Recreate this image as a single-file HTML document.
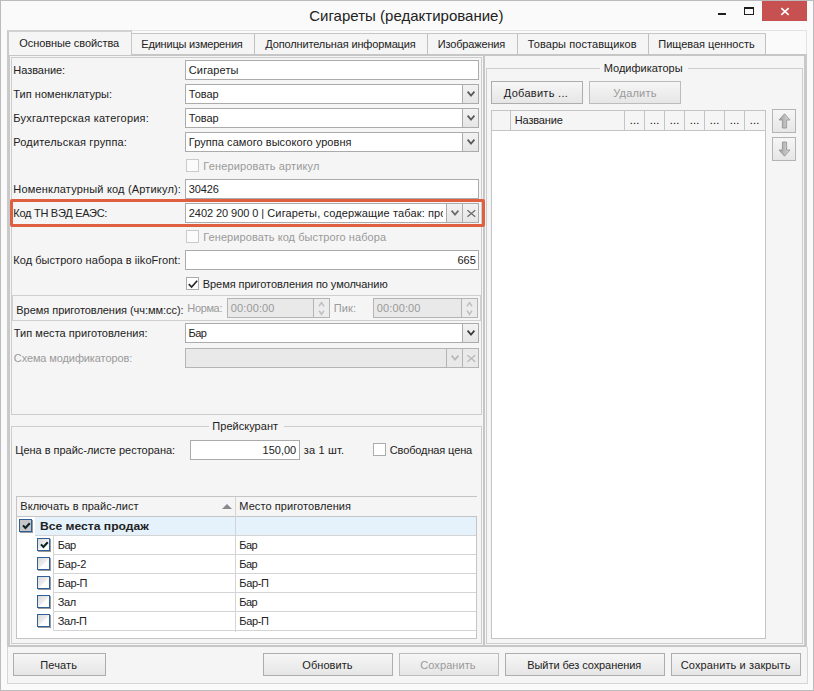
<!DOCTYPE html>
<html lang="ru"><head><meta charset="utf-8"><title>Сигареты (редактирование)</title><style>
html,body{margin:0;padding:0}
body{width:814px;height:691px;overflow:hidden;position:relative;background:#fafafa;font-family:"Liberation Sans",sans-serif;font-size:11px;color:#222}
div,span{position:absolute;box-sizing:border-box}
.t{white-space:nowrap;display:block;overflow:visible}
.in{background:#fff;border:1px solid #ababab}
.dis{background:#e9e9e9;border:1px solid #b4b4b4}
.cb{background:#fff;border:1px solid #ababab;width:13px;height:13px}
.cbd{background:#fbfbfb;border:1px solid #cacaca;width:13px;height:13px}
.btn{border:1px solid #adadad;background:linear-gradient(#f6f6f6,#e6e6e6)}
.cbtn{border:1px solid #ababab;background:linear-gradient(#f2f2f2,#e6e6e6);width:17px}
.tab{border-top:1px solid #c6c6c6;border-right:1px solid #c0c0c0;background:#f5f5f5;top:33px;height:22px}
.ln{background:#d4d4d4}
.tcb{width:13px;height:13px;border:1px solid #2f5f96;background:linear-gradient(135deg,#d9d9d9 0%,#ececec 48%,#fdfdfd 56%);box-shadow:1px 1px 0 #9a9a9a}
svg{position:absolute;overflow:visible}
</style></head><body>
<div class="" style="left:0px;top:0px;width:814px;height:691px;border:1px solid #bcbcbc"></div>
<span class="t " style="left:309.2px;top:5px;line-height:22px;height:22px;font-size:15px;letter-spacing:0.014px;">Сигареты (редактирование)</span>
<div class="" style="left:762px;top:1px;width:45px;height:20px;background:#c75050"></div>
<svg style="left:781px;top:8px" width="8" height="7" viewBox="0 0 8 7"><path d="M0.3 0.2 L7.7 6.8 M7.7 0.2 L0.3 6.8" stroke="#fff" stroke-width="1.6" fill="none"/></svg>
<div class="" style="left:744px;top:7px;width:10px;height:8px;border:1px solid #1e1e1e;border-top-width:2px"></div>
<div class="" style="left:718px;top:13px;width:8px;height:2px;background:#1e1e1e"></div>
<div class="" style="left:7px;top:30px;width:800px;height:26px;border:1px solid #e2e2e2;border-bottom:none"></div>
<div class="tab" style="left:132px;top:33px;width:123px;height:22px;"></div>
<span class="t " style="left:141.3px;top:33px;line-height:22px;height:22px;letter-spacing:-0.198px;">Единицы измерения</span>
<div class="tab" style="left:255px;top:33px;width:173px;height:22px;"></div>
<span class="t " style="left:265.3px;top:33px;line-height:22px;height:22px;letter-spacing:-0.139px;">Дополнительная информация</span>
<div class="tab" style="left:428px;top:33px;width:90px;height:22px;"></div>
<span class="t " style="left:437.8px;top:33px;line-height:22px;height:22px;letter-spacing:-0.167px;">Изображения</span>
<div class="tab" style="left:518px;top:33px;width:131px;height:22px;"></div>
<span class="t " style="left:527.8px;top:33px;line-height:22px;height:22px;letter-spacing:0.075px;">Товары поставщиков</span>
<div class="tab" style="left:649px;top:33px;width:117px;height:22px;"></div>
<span class="t " style="left:658.3px;top:33px;line-height:22px;height:22px;letter-spacing:-0.030px;">Пищевая ценность</span>
<div class="" style="left:7px;top:54px;width:800px;height:593px;border:2px solid #c6c6c6;border-left:3px solid #c9c9c9;border-right:3px solid #c9c9c9;background:#f5f5f5"></div>
<div class="" style="left:7px;top:30px;width:125px;height:25px;border-top:2px solid #d2d2d2;border-left:2px solid #c9c9c9;border-right:1px solid #c6c6c6;background:#f5f5f5"></div>
<span class="t " style="left:19.3px;top:31px;line-height:24px;height:24px;letter-spacing:-0.077px;">Основные свойства</span>
<div class="" style="left:483px;top:55px;width:2px;height:591px;background:#c6c6c6"></div>
<div class="" style="left:11px;top:57px;width:471px;height:358px;border:1px solid #cdcdcd"></div>
<div class="" style="left:11px;top:426px;width:471px;height:218px;border:1px solid #cdcdcd"></div>
<div class="" style="left:209px;top:424px;width:75px;height:5px;background:#f5f5f5"></div>
<span class="t " style="left:212.3px;top:416px;line-height:20px;height:20px;letter-spacing:0.032px;">Прейскурант</span>
<div class="" style="left:486px;top:68px;width:317px;height:576px;border:1px solid #cdcdcd"></div>
<div class="" style="left:600px;top:66px;width:88px;height:5px;background:#f5f5f5"></div>
<span class="t " style="left:603.8px;top:58px;line-height:20px;height:20px;letter-spacing:-0.010px;">Модификаторы</span>
<span class="t " style="left:13.3px;top:60px;line-height:20px;height:20px;letter-spacing:-0.047px;">Название:</span>
<span class="t " style="left:13.3px;top:84px;line-height:20px;height:20px;letter-spacing:0.035px;">Тип номенклатуры:</span>
<span class="t " style="left:13.3px;top:108px;line-height:20px;height:20px;letter-spacing:0.231px;">Бухгалтерская категория:</span>
<span class="t " style="left:13.3px;top:132px;line-height:20px;height:20px;letter-spacing:0.170px;">Родительская группа:</span>
<span class="t " style="left:13.3px;top:179px;line-height:20px;height:20px;letter-spacing:0.181px;">Номенклатурный код (Артикул):</span>
<span class="t " style="left:13.3px;top:203px;line-height:20px;height:20px;letter-spacing:-0.275px;">Код ТН ВЭД ЕАЭС:</span>
<span class="t " style="left:13.3px;top:250px;line-height:20px;height:20px;letter-spacing:0.049px;">Код быстрого набора в iikoFront:</span>
<span class="t " style="left:13.8px;top:323px;line-height:20px;height:20px;letter-spacing:0.037px;">Тип места приготовления:</span>
<span class="t " style="left:13.8px;top:348px;line-height:20px;height:20px;color:#9a9a9a;letter-spacing:-0.108px;">Схема модификаторов:</span>
<div class="in" style="left:185px;top:60px;width:294px;height:20px;"></div>
<span class="t " style="left:188.8px;top:60px;line-height:20px;height:20px;letter-spacing:0.125px;">Сигареты</span>
<div class="in" style="left:185px;top:84px;width:294px;height:20px;"></div>
<div class="cbtn" style="left:462px;top:84px;width:17px;height:20px;"><svg style="left:4px;top:6px" width="8" height="6" viewBox="0 0 8 6"><path d="M0.6 0.6 L4 4.6 L7.4 0.6" stroke="#585858" stroke-width="1.7" fill="none"/></svg></div>
<span class="t " style="left:188.8px;top:84px;line-height:20px;height:20px;letter-spacing:-0.027px;">Товар</span>
<div class="in" style="left:185px;top:108px;width:294px;height:20px;"></div>
<div class="cbtn" style="left:462px;top:108px;width:17px;height:20px;"><svg style="left:4px;top:6px" width="8" height="6" viewBox="0 0 8 6"><path d="M0.6 0.6 L4 4.6 L7.4 0.6" stroke="#585858" stroke-width="1.7" fill="none"/></svg></div>
<span class="t " style="left:188.8px;top:108px;line-height:20px;height:20px;letter-spacing:-0.027px;">Товар</span>
<div class="in" style="left:185px;top:132px;width:294px;height:20px;"></div>
<div class="cbtn" style="left:462px;top:132px;width:17px;height:20px;"><svg style="left:4px;top:6px" width="8" height="6" viewBox="0 0 8 6"><path d="M0.6 0.6 L4 4.6 L7.4 0.6" stroke="#585858" stroke-width="1.7" fill="none"/></svg></div>
<span class="t " style="left:188.8px;top:132px;line-height:20px;height:20px;letter-spacing:0.057px;">Группа самого высокого уровня</span>
<div class="in" style="left:185px;top:179px;width:294px;height:20px;"></div>
<span class="t " style="left:188.8px;top:179px;line-height:20px;height:20px;letter-spacing:-0.159px;">30426</span>
<div class="" style="left:10px;top:199px;width:475px;height:28px;border:3px solid #df6040;border-radius:2px"></div>
<div class="in" style="left:185px;top:203px;width:294px;height:20px;"></div>
<div class="cbtn" style="left:446px;top:203px;width:17px;height:20px;"><svg style="left:4px;top:6px" width="8" height="6" viewBox="0 0 8 6"><path d="M0.6 0.6 L4 4.6 L7.4 0.6" stroke="#6c6c6c" stroke-width="1.7" fill="none"/></svg></div>
<div class="cbtn" style="left:462px;top:203px;width:17px;height:20px;"><svg style="left:3.5px;top:6px" width="9" height="7" viewBox="0 0 9 7"><path d="M0.4 0.2 L8.2 6.8 M8.2 0.2 L0.4 6.8" stroke="#6c6c6c" stroke-width="1.25" fill="none"/></svg></div>
<div style="left:186px;top:204px;width:257px;height:18px;overflow:hidden"><span class="t " style="left:2.8px;top:0px;line-height:18px;height:18px;letter-spacing:-0.064px;">2402 20 900 0 |</span><span class="t " style="left:81.3px;top:0px;line-height:18px;height:18px;letter-spacing:0.132px;">Сигареты, содержащие табак: про</span></div>
<div class="in" style="left:185px;top:250px;width:294px;height:20px;"></div>
<span class="t " style="left:457.4px;top:250px;line-height:20px;height:20px;">665</span>
<div class="in" style="left:185px;top:323px;width:294px;height:20px;"></div>
<div class="cbtn" style="left:462px;top:323px;width:17px;height:20px;"><svg style="left:4px;top:6px" width="8" height="6" viewBox="0 0 8 6"><path d="M0.6 0.6 L4 4.6 L7.4 0.6" stroke="#3c3c3c" stroke-width="1.7" fill="none"/></svg></div>
<span class="t " style="left:188.5px;top:323px;line-height:20px;height:20px;letter-spacing:-0.523px;">Бар</span>
<div class="dis" style="left:185px;top:348px;width:294px;height:20px;"></div>
<div class="cbtn" style="left:446px;top:348px;width:17px;height:20px;background:#e9e9e9;border-color:#b4b4b4"><svg style="left:4px;top:6px" width="8" height="6" viewBox="0 0 8 6"><path d="M0.6 0.6 L4 4.6 L7.4 0.6" stroke="#b8b8b8" stroke-width="1.7" fill="none"/></svg></div>
<div class="cbtn" style="left:462px;top:348px;width:17px;height:20px;background:#e9e9e9;border-color:#b4b4b4"><svg style="left:3.5px;top:6px" width="9" height="7" viewBox="0 0 9 7"><path d="M0.4 0.2 L8.2 6.8 M8.2 0.2 L0.4 6.8" stroke="#b8b8b8" stroke-width="1.25" fill="none"/></svg></div>
<div class="cbd" style="left:186px;top:159px;width:13px;height:13px;"></div>
<span class="t " style="left:203.3px;top:156px;line-height:20px;height:20px;color:#9a9a9a;letter-spacing:0.152px;">Генерировать артикул</span>
<div class="cbd" style="left:186px;top:230px;width:13px;height:13px;"></div>
<span class="t " style="left:203.3px;top:227px;line-height:20px;height:20px;color:#9a9a9a;letter-spacing:0.071px;">Генерировать код быстрого набора</span>
<div class="cb" style="left:186px;top:277px;width:13px;height:13px;"><svg style="left:1px;top:2px" width="10" height="8" viewBox="0 0 10 8"><path d="M0.8 4.2 L3.6 7 L9.2 0.8" stroke="#2a2a2a" stroke-width="1.7" fill="none"/></svg></div>
<span class="t " style="left:202.8px;top:274px;line-height:20px;height:20px;letter-spacing:-0.064px;">Время приготовления по умолчанию</span>
<div class="" style="left:12px;top:295px;width:469px;height:26px;border:1px solid #cfcfcf"></div>
<span class="t " style="left:16.3px;top:300px;line-height:20px;height:20px;letter-spacing:-0.039px;">Время приготовления (чч:мм:сс):</span>
<span class="t " style="left:187.3px;top:298px;line-height:20px;height:20px;color:#9a9a9a;letter-spacing:-0.354px;">Норма:</span>
<span class="t " style="left:333.8px;top:298px;line-height:20px;height:20px;color:#9a9a9a;letter-spacing:0.095px;">Пик:</span>
<div class="dis" style="left:227px;top:298px;width:103px;height:20px;"></div>
<div class="dis" style="left:313px;top:298px;width:17px;height:20px;background:#ececec"><svg style="left:4px;top:2px" width="7" height="16" viewBox="0 0 7 16"><path d="M1 5.3 L3.5 1.6 L6 5.3 M1 9.6 L3.5 13.3 L6 9.6" stroke="#c0c0c0" stroke-width="1.6" fill="none"/></svg></div>
<span class="t " style="left:230.8px;top:298px;line-height:20px;height:20px;color:#9a9a9a;letter-spacing:0.121px;">00:00:00</span>
<div class="dis" style="left:373px;top:298px;width:105px;height:20px;"></div>
<div class="dis" style="left:461px;top:298px;width:17px;height:20px;background:#ececec"><svg style="left:4px;top:2px" width="7" height="16" viewBox="0 0 7 16"><path d="M1 5.3 L3.5 1.6 L6 5.3 M1 9.6 L3.5 13.3 L6 9.6" stroke="#c0c0c0" stroke-width="1.6" fill="none"/></svg></div>
<span class="t " style="left:376.8px;top:298px;line-height:20px;height:20px;color:#9a9a9a;letter-spacing:0.121px;">00:00:00</span>
<span class="t " style="left:15.3px;top:440px;line-height:20px;height:20px;letter-spacing:-0.018px;">Цена в прайс-листе ресторана:</span>
<div class="in" style="left:190px;top:440px;width:110px;height:20px;"></div>
<span class="t " style="left:262.6px;top:440px;line-height:20px;height:20px;">150,00</span>
<span class="t " style="left:303.8px;top:440px;line-height:20px;height:20px;letter-spacing:0.151px;">за 1 шт.</span>
<div class="cb" style="left:373px;top:443px;width:13px;height:13px;"></div>
<span class="t " style="left:389.8px;top:440px;line-height:20px;height:20px;letter-spacing:-0.127px;">Свободная цена</span>
<div class="" style="left:16px;top:496px;width:461px;height:143px;border:1px solid #c4c4c4;background:#fff"></div>
<div class="" style="left:17px;top:497px;width:460px;height:19px;background:#f5f5f5"></div>
<div class="" style="left:17px;top:516px;width:460px;height:1px;background:#c4c4c4"></div>
<div class="" style="left:235px;top:497px;width:1px;height:135px;background:#d4d4d4"></div>
<span class="t " style="left:20.3px;top:497px;line-height:19px;height:19px;letter-spacing:0.031px;">Включать в прайс-лист</span>
<span class="t " style="left:239.3px;top:497px;line-height:19px;height:19px;letter-spacing:0.084px;">Место приготовления</span>
<svg style="left:222px;top:504px" width="10" height="5" viewBox="0 0 10 5"><path d="M0 5 L5 0 L10 5 Z" fill="#8a8a8a"/></svg>
<div class="" style="left:35px;top:517px;width:441px;height:18px;background:#e5f1fb"></div>
<div class="" style="left:235px;top:517px;width:1px;height:18px;background:#d4d4d4"></div>
<div class="" style="left:35px;top:535px;width:441px;height:1px;background:#d4d4d4"></div>
<div class="tcb" style="left:19px;top:519px;width:13px;height:13px;background:#c6c6c6"><svg style="left:1.5px;top:2px" width="9" height="8" viewBox="0 0 9 8"><path d="M1 3.4 L3.4 6 L7.8 1.2" stroke="#0c2424" stroke-width="2.1" fill="none"/></svg></div>
<span class="t " style="left:40.3px;top:517px;line-height:18px;height:18px;font-weight:bold;transform:scaleX(1.1004);transform-origin:0 0;">Все места продаж</span>
<div class="" style="left:53px;top:536px;width:1px;height:18px;background:#d4d4d4"></div>
<div class="" style="left:53px;top:554px;width:423px;height:1px;background:#d4d4d4"></div>
<div class="tcb" style="left:37px;top:538px;width:13px;height:13px;"><svg style="left:1.5px;top:2px" width="9" height="8" viewBox="0 0 9 8"><path d="M1 3.4 L3.4 6 L7.8 1.2" stroke="#0c2424" stroke-width="2.1" fill="none"/></svg></div>
<span class="t " style="left:57.8px;top:536px;line-height:18px;height:18px;letter-spacing:-0.556px;">Бар</span>
<span class="t " style="left:239.3px;top:536px;line-height:18px;height:18px;letter-spacing:-0.556px;">Бар</span>
<div class="" style="left:53px;top:555px;width:1px;height:18px;background:#d4d4d4"></div>
<div class="" style="left:53px;top:573px;width:423px;height:1px;background:#d4d4d4"></div>
<div class="tcb" style="left:37px;top:557px;width:13px;height:13px;"></div>
<span class="t " style="left:57.8px;top:555px;line-height:18px;height:18px;letter-spacing:-0.190px;">Бар-2</span>
<span class="t " style="left:239.3px;top:555px;line-height:18px;height:18px;letter-spacing:-0.556px;">Бар</span>
<div class="" style="left:53px;top:574px;width:1px;height:18px;background:#d4d4d4"></div>
<div class="" style="left:53px;top:592px;width:423px;height:1px;background:#d4d4d4"></div>
<div class="tcb" style="left:37px;top:576px;width:13px;height:13px;"></div>
<span class="t " style="left:57.8px;top:574px;line-height:18px;height:18px;letter-spacing:-0.346px;">Бар-П</span>
<span class="t " style="left:239.3px;top:574px;line-height:18px;height:18px;letter-spacing:-0.346px;">Бар-П</span>
<div class="" style="left:53px;top:593px;width:1px;height:18px;background:#d4d4d4"></div>
<div class="" style="left:53px;top:611px;width:423px;height:1px;background:#d4d4d4"></div>
<div class="tcb" style="left:37px;top:595px;width:13px;height:13px;"></div>
<span class="t " style="left:57.8px;top:593px;line-height:18px;height:18px;letter-spacing:-0.462px;">Зал</span>
<span class="t " style="left:239.3px;top:593px;line-height:18px;height:18px;letter-spacing:-0.556px;">Бар</span>
<div class="" style="left:53px;top:612px;width:1px;height:18px;background:#d4d4d4"></div>
<div class="" style="left:53px;top:630px;width:423px;height:1px;background:#d4d4d4"></div>
<div class="tcb" style="left:37px;top:614px;width:13px;height:13px;"></div>
<span class="t " style="left:57.8px;top:612px;line-height:18px;height:18px;letter-spacing:-0.390px;">Зал-П</span>
<span class="t " style="left:239.3px;top:612px;line-height:18px;height:18px;letter-spacing:-0.346px;">Бар-П</span>
<div class="btn" style="left:491px;top:81px;width:92px;height:23px;"></div>
<span class="t " style="left:503.8px;top:82px;line-height:22px;height:22px;letter-spacing:0.288px;">Добавить ...</span>
<div class="btn" style="left:589px;top:81px;width:92px;height:23px;border-color:#bcbcbc"></div>
<span class="t " style="left:613.3px;top:82px;line-height:22px;height:22px;color:#9a9a9a;letter-spacing:0.186px;">Удалить</span>
<div class="" style="left:491px;top:110px;width:275px;height:529px;border:1px solid #c4c4c4;background:#fff"></div>
<div class="" style="left:492px;top:111px;width:273px;height:19px;background:#f5f5f5"></div>
<div class="" style="left:492px;top:130px;width:273px;height:1px;background:#c4c4c4"></div>
<div class="" style="left:510px;top:111px;width:1px;height:19px;background:#c4c4c4"></div>
<div class="" style="left:624px;top:111px;width:1px;height:19px;background:#c4c4c4"></div>
<div class="" style="left:644px;top:111px;width:1px;height:19px;background:#c4c4c4"></div>
<div class="" style="left:664px;top:111px;width:1px;height:19px;background:#c4c4c4"></div>
<div class="" style="left:684px;top:111px;width:1px;height:19px;background:#c4c4c4"></div>
<div class="" style="left:704px;top:111px;width:1px;height:19px;background:#c4c4c4"></div>
<div class="" style="left:724px;top:111px;width:1px;height:19px;background:#c4c4c4"></div>
<div class="" style="left:744px;top:111px;width:1px;height:19px;background:#c4c4c4"></div>
<span class="t " style="left:514.8px;top:111px;line-height:19px;height:19px;letter-spacing:-0.170px;">Название</span>
<span class="t " style="left:629.8px;top:111px;line-height:19px;height:19px;color:#000;letter-spacing:0.209px;">...</span>
<span class="t " style="left:649.8px;top:111px;line-height:19px;height:19px;color:#000;letter-spacing:0.209px;">...</span>
<span class="t " style="left:669.8px;top:111px;line-height:19px;height:19px;color:#000;letter-spacing:0.209px;">...</span>
<span class="t " style="left:689.8px;top:111px;line-height:19px;height:19px;color:#000;letter-spacing:0.209px;">...</span>
<span class="t " style="left:709.8px;top:111px;line-height:19px;height:19px;color:#000;letter-spacing:0.209px;">...</span>
<span class="t " style="left:729.8px;top:111px;line-height:19px;height:19px;color:#000;letter-spacing:0.209px;">...</span>
<span class="t " style="left:749.8px;top:111px;line-height:19px;height:19px;color:#000;letter-spacing:0.209px;">...</span>
<div class="btn" style="left:772px;top:109px;width:24px;height:24px;border-color:#b4b4b4"><svg style="left:5px;top:3px" width="13" height="16" viewBox="0 0 13 16"><defs><linearGradient id="g1" x1="0" x2="1"><stop offset="0" stop-color="#9c9c9c"/><stop offset="1" stop-color="#dcdcdc"/></linearGradient></defs><path d="M6.5 0.8 L12 7 L8.6 7 L8.6 15 L4.4 15 L4.4 7 L1 7 Z" fill="url(#g1)" stroke="#909090" stroke-width="0.8"/></svg></div>
<div class="btn" style="left:772px;top:137px;width:24px;height:24px;border-color:#b4b4b4"><svg style="left:5px;top:3px" width="13" height="16" viewBox="0 0 13 16"><defs><linearGradient id="g2" x1="0" x2="1"><stop offset="0" stop-color="#9c9c9c"/><stop offset="1" stop-color="#dcdcdc"/></linearGradient></defs><path d="M6.5 15.2 L12 9 L8.6 9 L8.6 1 L4.4 1 L4.4 9 L1 9 Z" fill="url(#g2)" stroke="#909090" stroke-width="0.8"/></svg></div>
<div class="" style="left:7px;top:647px;width:801px;height:37px;border:1px solid #d6d6d6;border-top:none;background:#f5f5f5"></div>
<div class="btn" style="left:13px;top:653px;width:93px;height:23px;"></div>
<span class="t " style="left:40.3px;top:654px;line-height:23px;height:23px;letter-spacing:0.126px;">Печать</span>
<div class="btn" style="left:263px;top:653px;width:130px;height:23px;"></div>
<span class="t " style="left:302.3px;top:654px;line-height:23px;height:23px;letter-spacing:0.061px;">Обновить</span>
<div class="btn" style="left:399px;top:653px;width:100px;height:23px;border-color:#bcbcbc"></div>
<span class="t " style="left:420.3px;top:654px;line-height:23px;height:23px;color:#9a9a9a;letter-spacing:0.070px;">Сохранить</span>
<div class="btn" style="left:505px;top:653px;width:160px;height:23px;"></div>
<span class="t " style="left:527.3px;top:654px;line-height:23px;height:23px;letter-spacing:-0.085px;">Выйти без сохранения</span>
<div class="btn" style="left:671px;top:653px;width:130px;height:23px;"></div>
<span class="t " style="left:680.8px;top:654px;line-height:23px;height:23px;letter-spacing:0.111px;">Сохранить и закрыть</span>
</body></html>
